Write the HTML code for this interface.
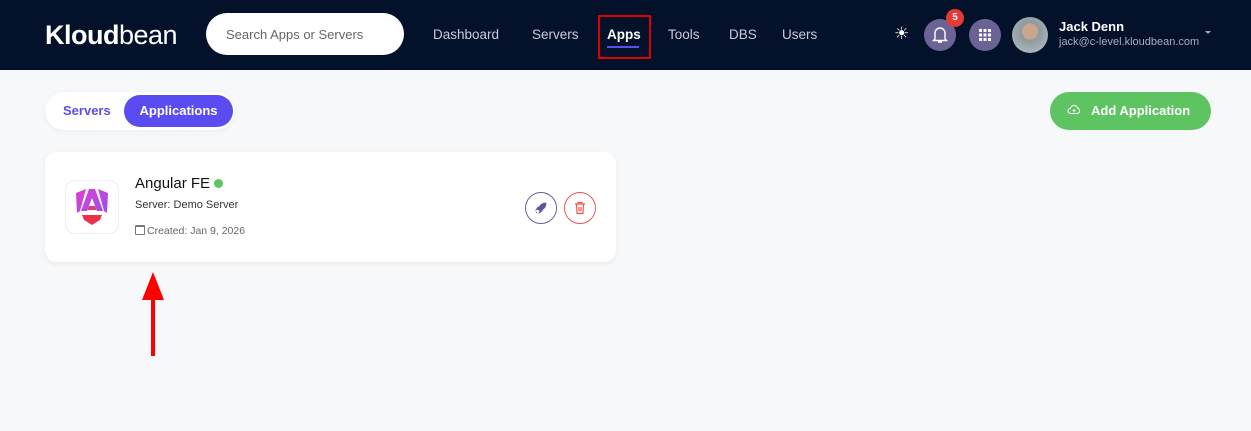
<!DOCTYPE html>
<html><head><meta charset="utf-8"><style>
*{box-sizing:border-box;margin:0;padding:0}
body{width:1251px;height:431px;background:#f7f8fa;font-family:"Liberation Sans",sans-serif;position:relative;overflow:hidden}
.nav{position:absolute;left:0;top:0;width:1251px;height:70px;background:#03112b}
.abs{position:absolute}
.logo{left:45px;top:20px;color:#fff;font-size:27px;font-weight:bold;letter-spacing:-0.5px}
.search{left:206px;top:13px;width:198px;height:42px;border-radius:21px;background:#fff;color:#666;font-size:13px;padding:14px 0 0 20px}
.nl{top:27px;color:#c8ccd6;font-size:13.5px}
.circ{border-radius:50%;background:#6b6395}
</style></head><body>
<div class="nav"></div>
<div class="abs logo">Kloud<span style="font-weight:normal">bean</span></div>
<div class="abs search">Search Apps or Servers</div>
<div class="abs nl" style="left:433px">Dashboard</div>
<div class="abs nl" style="left:532px">Servers</div>
<div class="abs" style="left:598px;top:15px;width:53px;height:44px;border:2px solid #e00000"></div>
<div class="abs nl" style="left:607px;color:#fff;font-weight:bold">Apps</div>
<div class="abs" style="left:607px;top:46px;width:32px;height:2px;background:#5b4df0"></div>
<div class="abs nl" style="left:668px">Tools</div>
<div class="abs nl" style="left:729px">DBS</div>
<div class="abs nl" style="left:782px">Users</div>
<div class="abs" style="left:894px;top:24px;color:#fff;font-size:17px">☀</div>
<div class="abs circ" style="left:924px;top:19px;width:32px;height:32px"></div>
<svg class="abs" style="left:931px;top:25px" width="18" height="20" viewBox="0 0 18 20"><path d="M4 14V8a5 5 0 0 1 10 0v6l1.5 1.5h-13z M7 17h4" fill="none" stroke="#fff" stroke-width="1.4"/></svg>
<div class="abs" style="left:946px;top:9px;width:18px;height:18px;border-radius:50%;background:#e53935;color:#fff;font-size:10px;font-weight:bold;text-align:center;line-height:18px">5</div>
<div class="abs circ" style="left:969px;top:19px;width:32px;height:32px"></div>
<div class="abs" style="left:979px;top:29px;width:12px;height:12px;background:repeating-linear-gradient(90deg,#fff 0 3px,transparent 3px 4.5px);-webkit-mask:repeating-linear-gradient(0deg,#000 0 3px,transparent 3px 4.5px)"></div>
<div class="abs" style="left:1012px;top:17px;width:36px;height:36px;border-radius:50%;background:radial-gradient(circle at 50% 40%,#c9a58c 0 28%,#8c9a9e 30%,#b7c3c6 100%)"></div>
<div class="abs" style="left:1059px;top:19px;color:#fff;font-size:13px;font-weight:bold">Jack Denn</div>
<div class="abs" style="left:1059px;top:36px;color:#a9aebb;font-size:11px">jack@c-level.kloudbean.com</div>
<div class="abs" style="left:1205px;top:31px;border:3px solid transparent;border-top:3px solid #aaa"></div>

<div class="abs" style="left:45px;top:92px;width:190px;height:38px;border-radius:19px;background:#fff;box-shadow:0 1px 4px rgba(0,0,0,.06)"></div>
<div class="abs" style="left:63px;top:103px;color:#5a4cf0;font-size:13px;font-weight:bold">Servers</div>
<div class="abs" style="left:124px;top:95px;width:109px;height:32px;border-radius:16px;background:#5b4cf2;color:#fff;font-size:13px;font-weight:bold;text-align:center;line-height:32px">Applications</div>
<div class="abs" style="left:1050px;top:92px;width:161px;height:38px;border-radius:19px;background:#5ec361;color:#fff;font-size:13px;font-weight:bold;line-height:38px;padding-left:41px">Add Application</div>
<svg class="abs" style="left:1067px;top:104px" width="14" height="12" viewBox="0 0 14 12"><path d="M3.5 9.5a2.5 2.5 0 0 1 0-5 3.5 3.5 0 0 1 6.8-.5 2.8 2.8 0 0 1 0 5.5z M7 5v3M5.5 6.5h3" fill="none" stroke="#fff" stroke-width="1"/></svg>

<div class="abs" style="left:45px;top:152px;width:571px;height:110px;border-radius:12px;background:#fff;box-shadow:0 2px 6px rgba(0,0,0,.06)"></div>
<div class="abs" style="left:65px;top:180px;width:54px;height:54px;border-radius:10px;border:1px solid #eee;background:#fff"></div>
<svg class="abs" style="left:74px;top:187px" width="36" height="40" viewBox="0 0 36 40"><defs><linearGradient id="g" x1="0" y1="0" x2="1" y2="1"><stop offset="0" stop-color="#e040c8"/><stop offset="1" stop-color="#9b4df5"/></linearGradient></defs><path d="M2 6L12 2 6 24 3 26z M34 6L24 2l6 22 3 2z M15 2h6l8 22h-6l-5-13-5 13H7z" fill="url(#g)"/><path d="M15 19h6l1.5 4h-9z" fill="#e03b7a"/><path d="M8 28h20l-2 5-8 5-8-5z" fill="#e8344a"/></svg>
<div class="abs" style="left:135px;top:175px;color:#111;font-size:15px">Angular FE</div>
<div class="abs" style="left:214px;top:179px;width:9px;height:9px;border-radius:50%;background:#5ec361"></div>
<div class="abs" style="left:135px;top:199px;color:#333;font-size:11px">Server: Demo Server</div>
<div class="abs" style="left:135px;top:225px;width:10px;height:10px;border:1px solid #777;border-top-width:2px;border-radius:1px"></div>
<div class="abs" style="left:147px;top:225px;color:#666;font-size:10.5px">Created: Jan 9, 2026</div>
<div class="abs" style="left:525px;top:192px;width:32px;height:32px;border-radius:50%;border:1px solid #6b5f9e"></div>
<svg class="abs" style="left:533px;top:200px" width="16" height="16" viewBox="0 0 16 16"><path d="M13 3c-4 0-6 2-8 6l2 2c4-2 6-4 6-8z M5 9l-2 1 2-3z M7 11l-1 2 3-2z M4 12l-1 1" fill="#5e5496" stroke="#5e5496" stroke-width=".8"/></svg>
<div class="abs" style="left:564px;top:192px;width:32px;height:32px;border-radius:50%;border:1px solid #ef5350"></div>
<svg class="abs" style="left:572px;top:200px" width="16" height="16" viewBox="0 0 16 16"><path d="M3 4h10M6 4V2.5h4V4M4.5 4l.6 9.5h5.8l.6-9.5M7 7v4M9 7v4" fill="none" stroke="#ef5350" stroke-width="1.2"/></svg>

<div class="abs" style="left:151px;top:290px;width:4px;height:66px;background:#f00"></div>
<div class="abs" style="left:142px;top:272px;width:0;height:0;border-left:11px solid transparent;border-right:11px solid transparent;border-bottom:28px solid #f00"></div>
</body></html>
